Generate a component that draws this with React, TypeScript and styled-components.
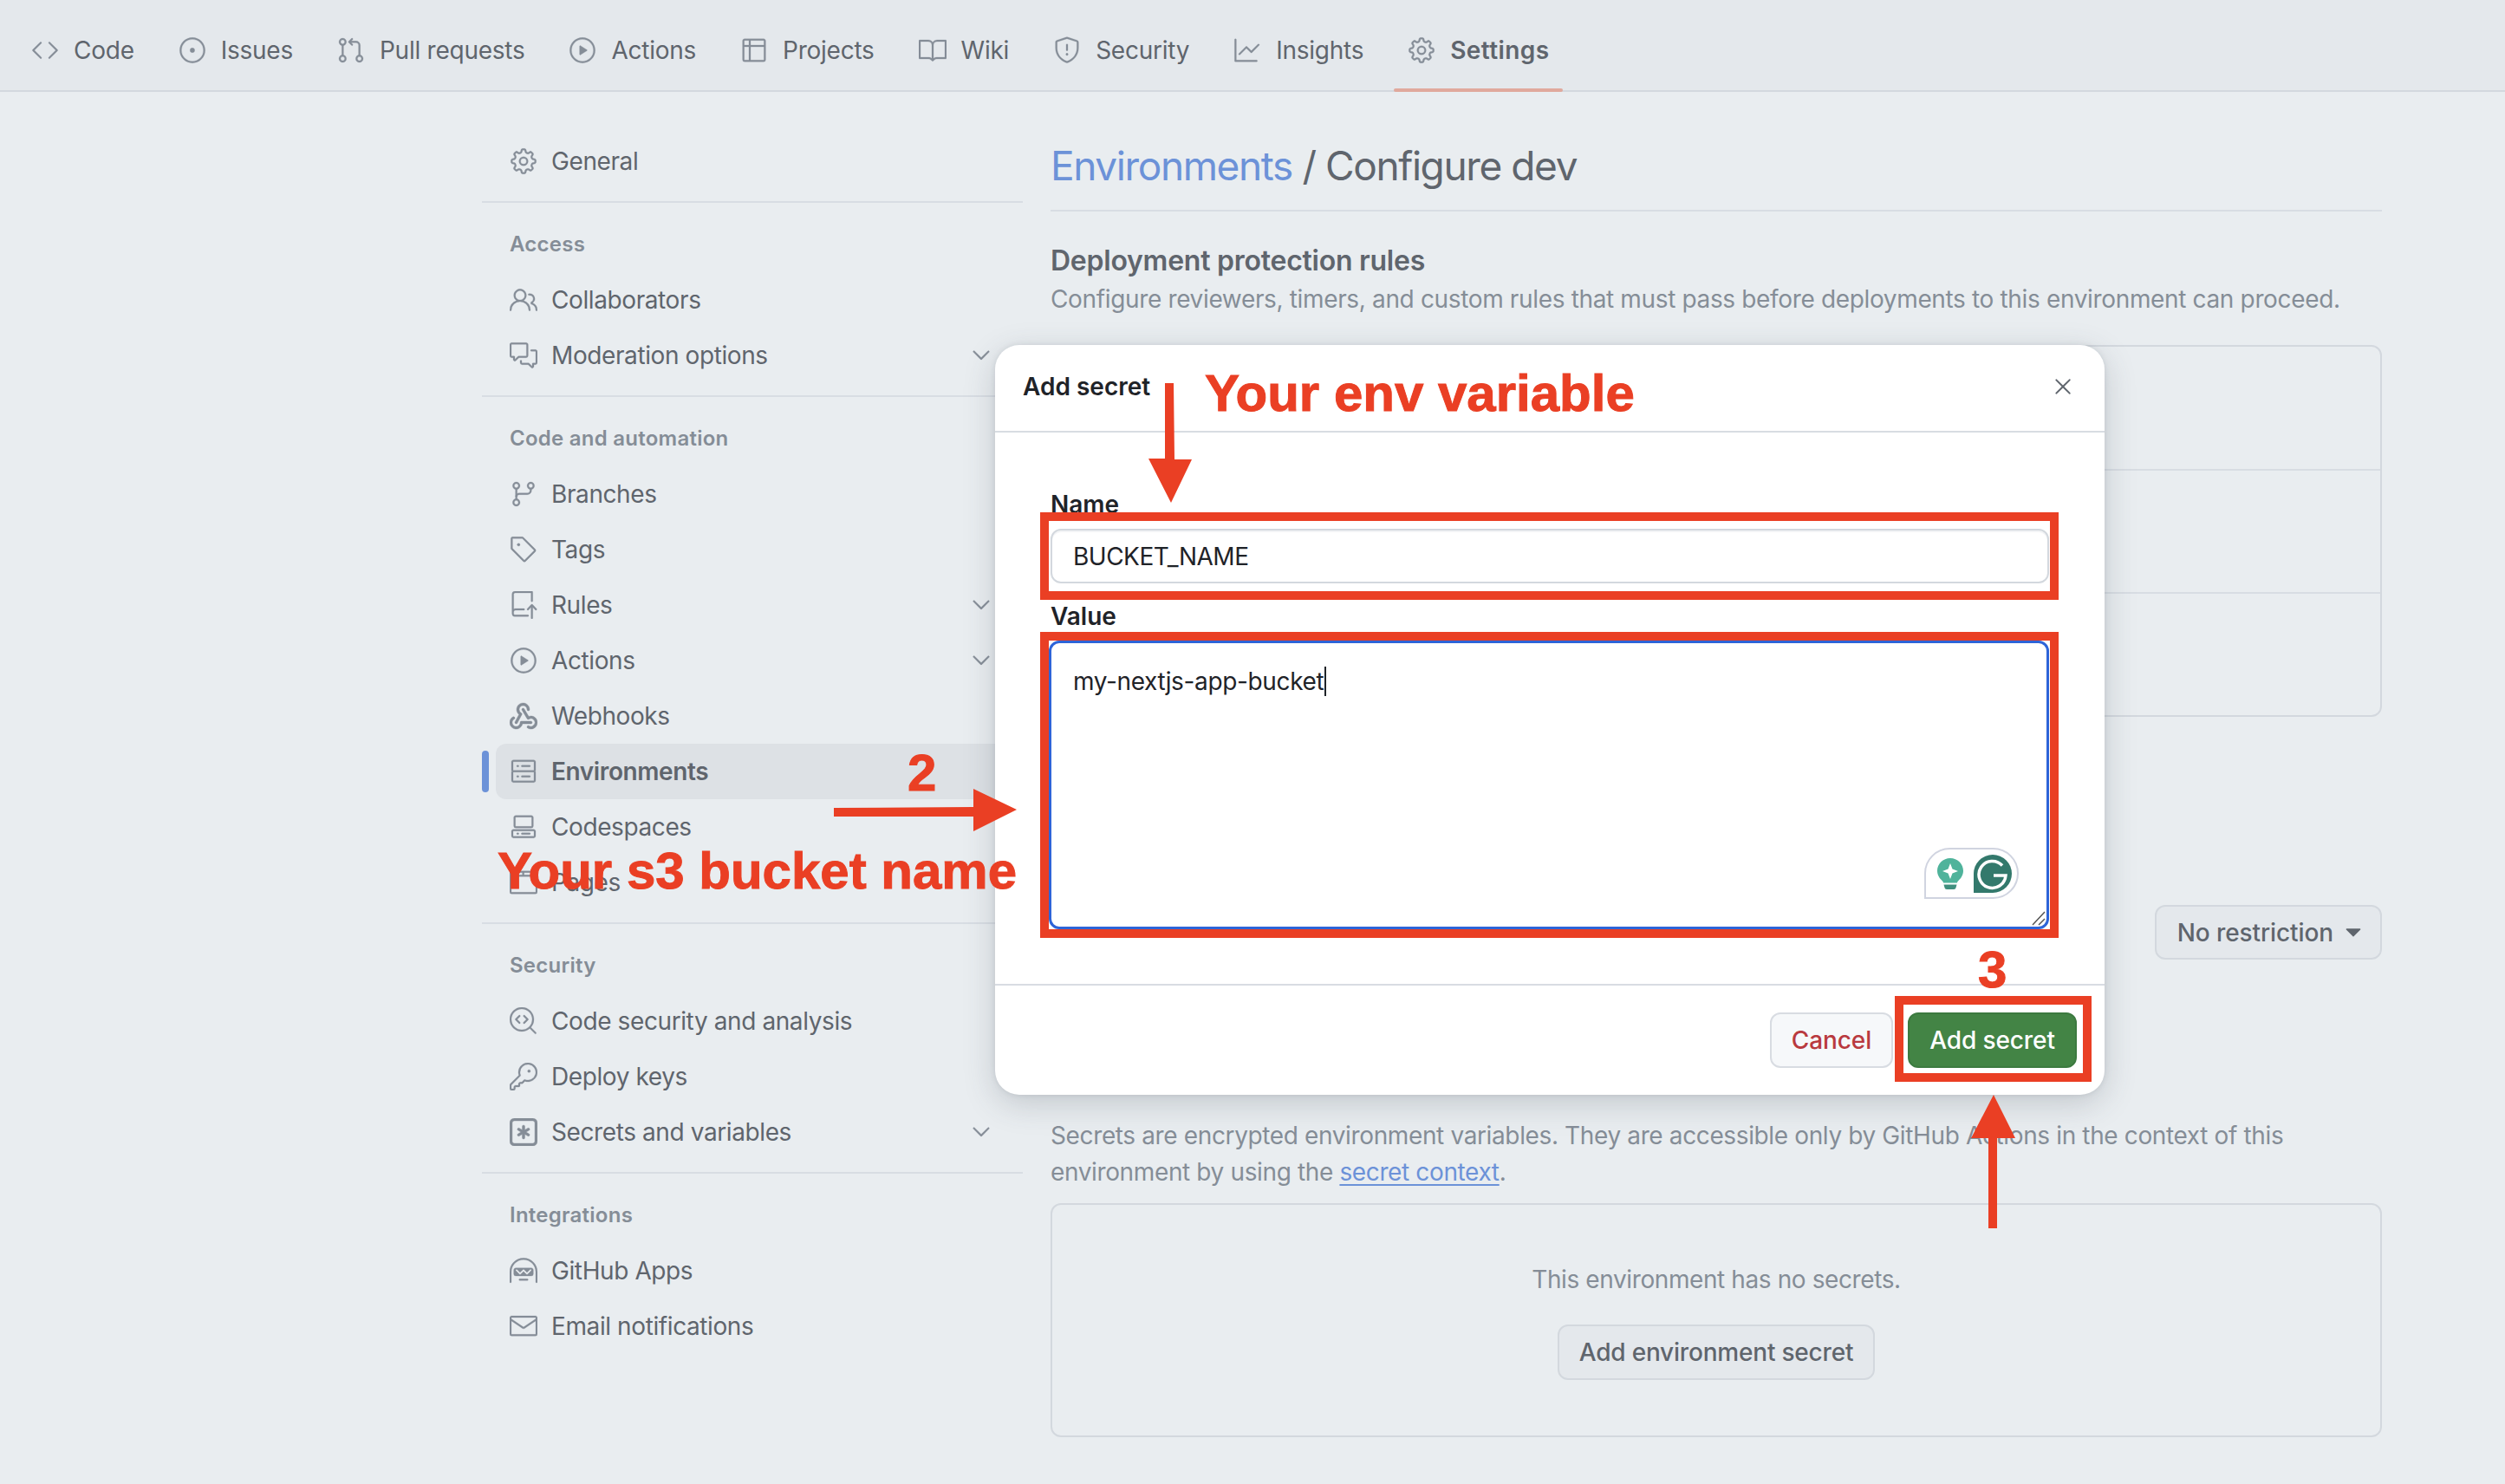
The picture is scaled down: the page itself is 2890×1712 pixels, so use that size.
import React from 'react';
import styled, { createGlobalStyle } from 'styled-components';
import {
  GoBook,
  GoBrowser,
  GoChevronDown,
  GoCode,
  GoCodescan,
  GoCodespaces,
  GoCommentDiscussion,
  GoGear,
  GoGitBranch,
  GoGitPullRequest,
  GoGraph,
  GoHubot,
  GoIssueOpened,
  GoKey,
  GoMail,
  GoPeople,
  GoPlay,
  GoRepoPush,
  GoServer,
  GoShield,
  GoTable,
  GoTag,
  GoTriangleDown,
  GoX,
} from 'react-icons/go';

const RED = '#ea3f24';
const FONT = 'Inter, "Liberation Sans", sans-serif';

const GlobalStyle = createGlobalStyle`
  html, body {
    margin: 0;
    padding: 0;
    background: #e9edf0;
  }
  * {
    box-sizing: border-box;
  }
`;

const Page = styled.div`
  position: relative;
  width: 2890px;
  height: 1712px;
  overflow: hidden;
  background: #e9edf0;
  font-family: ${FONT};
  font-size: 28px;
  color: #5f656d;
`;

const TabBar = styled.nav`
  display: flex;
  align-items: center;
  gap: 19px;
  height: 106px;
  padding: 0 0 0 20px;
  background: #e4e8ec;
  border-bottom: 2px solid #d3d8de;
`;

const Tab = styled.div<{ $active?: boolean }>`
  position: relative;
  display: flex;
  align-items: center;
  gap: 17px;
  height: 104px;
  padding: 11px 16px 0;
  font-weight: ${({ $active }) => ($active ? 600 : 400)};
  letter-spacing: ${({ $active }) => ($active ? '0.4px' : '-0.25px')};
  color: #5f656d;

  svg {
    color: #858d97;
    flex: none;
    stroke: currentColor;
    stroke-width: 0.2;
  }

  ${({ $active }) =>
    $active &&
    `
    &::after {
      content: '';
      position: absolute;
      left: 0;
      right: 0;
      bottom: -2px;
      height: 4px;
      border-radius: 2px;
      background: #e0a99d;
    }
  `}
`;

const Content = styled.div`
  display: grid;
  grid-template-columns: 624px 1536px;
  column-gap: 32px;
  padding: 48px 0 0 556px;
`;

const Sidebar = styled.aside`
  display: flex;
  flex-direction: column;
`;

const NavSection = styled.section<{ $first?: boolean; $last?: boolean }>`
  padding: ${({ $first }) => ($first ? '0' : '32px')} 0 14px;
  border-bottom: ${({ $last }) => ($last ? 'none' : '2px solid #d8dde3')};
`;

const NavLabel = styled.div`
  height: 32px;
  margin: 0 0 16px 32px;
  font-size: 24px;
  line-height: 32px;
  font-weight: 600;
  letter-spacing: 0.25px;
  color: #858d97;
`;

const NavRow = styled.div<{ $active?: boolean }>`
  position: relative;
  display: flex;
  align-items: center;
  gap: 16px;
  height: 64px;
  margin: 0 16px;
  padding: 0 16px;
  border-radius: 12px;
  background: ${({ $active }) => ($active ? '#dde1e5' : 'transparent')};
  font-weight: ${({ $active }) => ($active ? 600 : 400)};
  letter-spacing: -0.4px;

  svg {
    color: #858d97;
    flex: none;
    stroke: currentColor;
    stroke-width: 0.2;
  }

  ${({ $active }) =>
    $active &&
    `
    &::before {
      content: '';
      position: absolute;
      left: -16px;
      top: 8px;
      width: 8px;
      height: 48px;
      border-radius: 4px;
      background: #6c92d8;
    }
  `}
`;

const NavText = styled.span`
  flex: 1;
`;

const Main = styled.main`
  display: flex;
  flex-direction: column;
`;

const Title = styled.h1`
  margin: 0;
  padding-bottom: 14px;
  border-bottom: 2px solid #d8dde3;
  font-size: 46px;
  line-height: 74px;
  font-weight: 400;
  letter-spacing: -1.4px;
  color: #5f656d;
`;

const TitleLink = styled.span`
  color: #6c92d8;
`;

const SectionHeading = styled.h2`
  margin: 35px 0 0;
  font-size: 32px;
  line-height: 44px;
  font-weight: 600;
  letter-spacing: -0.25px;
  color: #5f656d;
`;

const Muted = styled.p`
  margin: 0;
  font-size: 28px;
  line-height: 44px;
  color: #858d97;
  letter-spacing: -0.35px;
`;

const RulesBox = styled.div`
  display: grid;
  grid-template-rows: 143px 142px 144px;
  height: 429px;
  margin-top: 31px;
  border: 2px solid #d3d8de;
  border-radius: 12px;
`;

const RuleRow = styled.div`
  border-bottom: 2px solid #d8dde3;

  &:last-child {
    border-bottom: none;
  }
`;

const BranchRow = styled.div`
  display: flex;
  justify-content: flex-end;
  margin-top: 217px;
`;

const GhostButton = styled.div`
  display: inline-flex;
  align-items: center;
  justify-content: center;
  gap: 7px;
  height: 63px;
  padding: 0 15px 0 24px;
  border: 2px solid #d3d8de;
  border-radius: 12px;
  background: #e4e8ec;
  font-weight: 500;
  letter-spacing: -0.1px;
  color: #5f656d;

  svg {
    color: #5f656d;
  }
`;

const SecretsText = styled.p`
  margin: 182px 0 0;
  font-size: 28px;
  line-height: 42px;
  color: #858d97;
  letter-spacing: -0.37px;
`;

const TextLink = styled.span`
  color: #6c92d8;
  text-decoration: underline;
  text-underline-offset: 4px;
`;

const EmptyBox = styled.div`
  display: flex;
  flex-direction: column;
  align-items: center;
  height: 270px;
  margin-top: 15px;
  padding-top: 64px;
  border: 2px solid #d3d8de;
  border-radius: 12px;
`;

const EmptyText = styled.div`
  height: 44px;
  margin-bottom: 30px;
  line-height: 44px;
  letter-spacing: -0.4px;
  color: #858d97;
`;

const EmptyButton = styled(GhostButton)`
  height: 64px;
  width: 366px;
  padding: 0;
  letter-spacing: -0.2px;
`;

const Modal = styled.div`
  position: absolute;
  left: 1148px;
  top: 398px;
  display: flex;
  flex-direction: column;
  width: 1280px;
  height: 865px;
  border-radius: 28px;
  background: #fff;
  box-shadow: 0 10px 36px rgba(60, 70, 80, 0.22), 0 0 6px rgba(60, 70, 80, 0.12);
`;

const ModalHeader = styled.header`
  display: flex;
  align-items: center;
  justify-content: space-between;
  height: 101px;
  padding: 0 32px 4px 32px;
  border-bottom: 2px solid #d8dce2;
  font-weight: 600;
  color: #1f2328;

  svg {
    color: #5f656d;
  }
`;

const ModalBody = styled.div`
  flex: 1;
  padding: 63px 64px 0;
  border-bottom: 2px solid #d8dce2;
`;

const FieldLabel = styled.div`
  height: 40px;
  line-height: 40px;
  font-weight: 600;
  color: #1f2328;
`;

const NameInput = styled.div`
  display: flex;
  align-items: center;
  height: 63px;
  margin: 8px 0 18px;
  padding: 0 24px;
  border: 2px solid #d3d8de;
  border-radius: 12px;
  box-shadow: inset 0 2px 0 #f3f4f6;
  letter-spacing: -0.5px;
  color: #1f2328;
`;

const ValueArea = styled.div`
  position: relative;
  height: 333px;
  margin: 8px 0 0 -2px;
  padding: 24px 25px;
  border: 3px solid #2d64d8;
  border-radius: 12px;
  line-height: 40px;
  color: #1f2328;
  letter-spacing: -0.35px;
`;

const Caret = styled.span`
  display: inline-block;
  width: 2px;
  height: 34px;
  margin-left: 1px;
  vertical-align: -7px;
  background: #1f2328;
`;

const ResizeGrip = styled.svg`
  position: absolute;
  right: 1px;
  bottom: 1px;
`;

const GrammarlyPill = styled.div`
  position: absolute;
  right: 32px;
  bottom: 32px;
  display: flex;
  align-items: center;
  justify-content: center;
  gap: 12px;
  width: 109px;
  height: 59px;
  padding-left: 6px;
  border: 2px solid #d0d4e0;
  border-radius: 30px 30px 30px 0;
  background: #fff;
`;

const ModalFooter = styled.footer`
  display: flex;
  justify-content: flex-end;
  gap: 17px;
  height: 126px;
  padding: 31px 32px 0 0;
`;

const FooterButton = styled.div<{ $primary?: boolean }>`
  display: flex;
  align-items: center;
  justify-content: center;
  width: ${({ $primary }) => ($primary ? 195 : 142)}px;
  height: 64px;
  border: 2px solid ${({ $primary }) => ($primary ? '#3c7a40' : '#d8dce2')};
  border-radius: 12px;
  background: ${({ $primary }) => ($primary ? '#438445' : '#f6f8fa')};
  font-weight: 500;
  letter-spacing: -0.1px;
  color: ${({ $primary }) => ($primary ? '#fff' : '#b93a3f')};
`;

const Highlight = styled.div<{ $left: number; $top: number; $width: number; $height: number }>`
  position: absolute;
  left: ${({ $left }) => $left}px;
  top: ${({ $top }) => $top}px;
  width: ${({ $width }) => $width}px;
  height: ${({ $height }) => $height}px;
  border: 10px solid ${RED};
`;

const Callout = styled.div<{ $left: number; $top: number }>`
  position: absolute;
  left: ${({ $left }) => $left}px;
  top: ${({ $top }) => $top}px;
  font-family: 'Liberation Sans', Arial, sans-serif;
  font-size: 60px;
  line-height: 60px;
  font-weight: 700;
  white-space: nowrap;
  color: ${RED};
  -webkit-text-stroke: 1px ${RED};
`;

const ArrowLayer = styled.svg`
  position: absolute;
  left: 0;
  top: 0;
  pointer-events: none;
`;

const WebhookIcon = ({ size }: { size: number }) => (
  <svg width={size} height={size} viewBox="0 0 16 16" fill="currentColor">
    <path d="M5.5 4.25a2.25 2.25 0 0 1 4.5 0 .75.75 0 0 0 1.5 0 3.75 3.75 0 1 0-6.14 2.889l-2.272 4.258a.75.75 0 0 0 1.324.706L7 7.25a.75.75 0 0 0-.309-1.015A2.25 2.25 0 0 1 5.5 4.25Z" />
    <path d="M7.364 3.607a.75.75 0 0 1 1.03.257l2.608 4.349a3.75 3.75 0 1 1-.628 6.785.75.75 0 0 1 .752-1.299 2.25 2.25 0 1 0-.033-3.88.75.75 0 0 1-1.03-.256L7.107 4.636a.75.75 0 0 1 .257-1.03Z" />
    <path d="M2.9 8.776A.75.75 0 0 1 2.625 9.8 2.25 2.25 0 1 0 6 11.75a.75.75 0 0 1 .75-.751h5.5a.75.75 0 0 1 0 1.5H7.425a3.751 3.751 0 1 1-5.55-3.998.75.75 0 0 1 1.024.274Z" />
  </svg>
);

const KeyAsteriskIcon = ({ size }: { size: number }) => (
  <svg width={size} height={size} viewBox="0 0 16 16" fill="currentColor">
    <path d="M0 2.75A2.75 2.75 0 0 1 2.75 0h10.5A2.75 2.75 0 0 1 16 2.75v10.5A2.75 2.75 0 0 1 13.25 16H2.75A2.75 2.75 0 0 1 0 13.25ZM2.75 1.5c-.69 0-1.25.56-1.25 1.25v10.5c0 .69.56 1.25 1.25 1.25h10.5c.69 0 1.25-.56 1.25-1.25V2.75c0-.69-.56-1.25-1.25-1.25Z" />
    <path d="M8 4a.75.75 0 0 1 .75.75V6.7l1.69-.975a.75.75 0 0 1 .75 1.3L9.5 8l1.69.976a.75.75 0 0 1-.75 1.298L8.75 9.3v1.951a.75.75 0 0 1-1.5 0V9.299l-1.69.976a.75.75 0 0 1-.75-1.3L6.5 8l-1.69-.975a.75.75 0 0 1 .75-1.3l1.69.976V4.75A.75.75 0 0 1 8 4Z" />
  </svg>
);

const tabs = [
  { icon: GoCode, label: 'Code' },
  { icon: GoIssueOpened, label: 'Issues' },
  { icon: GoGitPullRequest, label: 'Pull requests' },
  { icon: GoPlay, label: 'Actions' },
  { icon: GoTable, label: 'Projects' },
  { icon: GoBook, label: 'Wiki' },
  { icon: GoShield, label: 'Security' },
  { icon: GoGraph, label: 'Insights' },
  { icon: GoGear, label: 'Settings', active: true },
];

const navSections = [
  { items: [{ icon: GoGear, label: 'General' }] },
  {
    label: 'Access',
    items: [
      { icon: GoPeople, label: 'Collaborators' },
      { icon: GoCommentDiscussion, label: 'Moderation options', more: true },
    ],
  },
  {
    label: 'Code and automation',
    items: [
      { icon: GoGitBranch, label: 'Branches' },
      { icon: GoTag, label: 'Tags' },
      { icon: GoRepoPush, label: 'Rules', more: true },
      { icon: GoPlay, label: 'Actions', more: true },
      { icon: WebhookIcon, label: 'Webhooks' },
      { icon: GoServer, label: 'Environments', active: true },
      { icon: GoCodespaces, label: 'Codespaces' },
      { icon: GoBrowser, label: 'Pages' },
    ],
  },
  {
    label: 'Security',
    items: [
      { icon: GoCodescan, label: 'Code security and analysis' },
      { icon: GoKey, label: 'Deploy keys' },
      { icon: KeyAsteriskIcon, label: 'Secrets and variables', more: true },
    ],
  },
  {
    label: 'Integrations',
    items: [
      { icon: GoHubot, label: 'GitHub Apps' },
      { icon: GoMail, label: 'Email notifications' },
    ],
  },
];

const GrammarlyIcons = () => (
  <>
    <svg width="30" height="36" viewBox="0 0 30 36">
      <path
        d="M15 0C6.7 0 0 6.6 0 14.6c0 5 2.6 8.600 5.600 11.400.9.9 1.400 1.600 1.400 2.600h16c0-1 .5-1.700 1.400-2.600 3-2.800 5.600-6.400 5.600-11.400C30 6.600 23.300 0 15 0z"
        fill="#4fb39b"
      />
      <path d="M7.500 30.500h15l-1 3.500c-.3 1-1 2-2.500 2h-8c-1.500 0-2.200-1-2.500-2z" fill="#3f8f7e" />
      <path d="M15 6l2.500 6.500L24 15l-6.500 2.500L15 24l-2.500-6.500L6 15l6.500-2.500z" fill="#fff" />
    </svg>
    <svg width="44" height="44" viewBox="0 0 44 44">
      <path d="M22 0a22 22 0 0 1 0 44H0V22A22 22 0 0 1 22 0z" fill="#33796c" />
      <path d="M33 12.500A15.500 15.500 0 1 0 37 24H23" fill="none" stroke="#fff" strokeWidth="3.500" />
    </svg>
  </>
);

export default function App() {
  return (
    <Page>
      <GlobalStyle />
      <TabBar>
        {tabs.map(({ icon: Icon, label, active }) => (
          <Tab key={label} $active={active}>
            <Icon size={32} />
            {label}
          </Tab>
        ))}
      </TabBar>

      <Content>
        <Sidebar>
          {navSections.map((section, index) => (
            <NavSection
              key={section.label || 'general'}
              $first={index === 0}
              $last={index === navSections.length - 1}
            >
              {section.label && <NavLabel>{section.label}</NavLabel>}
              {section.items.map(({ icon: Icon, label, active, more }: any) => (
                <NavRow key={label} $active={active}>
                  <Icon size={32} />
                  <NavText>{label}</NavText>
                  {more && <GoChevronDown size={32} />}
                </NavRow>
              ))}
            </NavSection>
          ))}
        </Sidebar>

        <Main>
          <Title>
            <TitleLink>Environments</TitleLink> / Configure dev
          </Title>
          <SectionHeading>Deployment protection rules</SectionHeading>
          <Muted>
            Configure reviewers, timers, and custom rules that must pass before deployments to this
            environment can proceed.
          </Muted>
          <RulesBox>
            <RuleRow />
            <RuleRow />
            <RuleRow />
          </RulesBox>
          <BranchRow>
            <GhostButton>
              No restriction
              <GoTriangleDown size={32} />
            </GhostButton>
          </BranchRow>
          <SecretsText>
            Secrets are encrypted environment variables. They are accessible only by GitHub Actions
            in the context of this
            <br />
            environment by using the <TextLink>secret context</TextLink>.
          </SecretsText>
          <EmptyBox>
            <EmptyText>This environment has no secrets.</EmptyText>
            <EmptyButton>Add environment secret</EmptyButton>
          </EmptyBox>
        </Main>
      </Content>

      <Modal>
        <ModalHeader>
          Add secret
          <GoX size={32} />
        </ModalHeader>
        <ModalBody>
          <FieldLabel>Name</FieldLabel>
          <NameInput>BUCKET_NAME</NameInput>
          <FieldLabel>Value</FieldLabel>
          <ValueArea>
            my-nextjs-app-bucket
            <Caret />
            <GrammarlyPill>
              <GrammarlyIcons />
            </GrammarlyPill>
            <ResizeGrip width="16" height="18" viewBox="0 0 16 18">
              <path d="M1 17L15 2M8 17l7-7" stroke="#555" strokeWidth="1.500" fill="none" />
            </ResizeGrip>
          </ValueArea>
        </ModalBody>
        <ModalFooter>
          <FooterButton>Cancel</FooterButton>
          <FooterButton $primary>Add secret</FooterButton>
        </ModalFooter>
      </Modal>

      <Highlight $left={1200} $top={591} $width={1175} $height={101} />
      <Highlight $left={1200} $top={729} $width={1175} $height={353} />
      <Highlight $left={2186} $top={1149} $width={227} $height={99} />

      <Callout $left={1390} $top={424}>
        Your env variable
      </Callout>
      <Callout $left={1047} $top={862}>
        2
      </Callout>
      <Callout $left={574} $top={975}>
        Your s3 bucket name
      </Callout>
      <Callout $left={2282} $top={1089}>
        3
      </Callout>

      <ArrowLayer width="2890" height="1712" viewBox="0 0 2890 1712">
        <path d="M1344 442h10l1 88h20l-24 50-26-51h19z" fill={RED} />
        <path d="M962 932l161-1v-21l50 24-50 25v-17H962z" fill={RED} />
        <path d="M2300 1263l25 50h-21v104h-10v-104h-20z" fill={RED} />
      </ArrowLayer>
    </Page>
  );
}
